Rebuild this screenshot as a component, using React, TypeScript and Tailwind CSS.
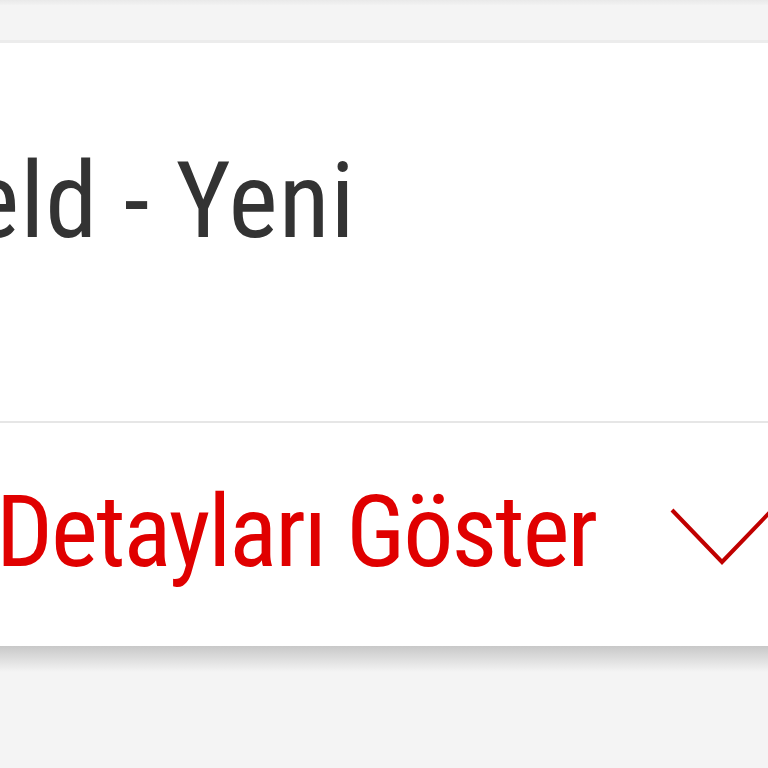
export default function App() {
  return (
    <div className="w-[768px] h-[768px] bg-[#f4f4f4] overflow-hidden flex flex-col" style={{ fontFamily: "Roboto, 'Noto Sans', sans-serif", fontStretch: "condensed" }}>
      <div className="h-[5px] bg-gradient-to-b from-[#e9e9e9] to-[#f2f2f2]" />
      <div className="h-[35px]" />
      <div className="h-[3px] bg-[#ececec]" />
      <div className="bg-white flex flex-col">
        <div className="h-[378px] pt-[106px] overflow-hidden">
          <div className="text-[105px] leading-none text-[#333333] whitespace-nowrap -ml-[30px] tracking-[1px]">eld - Yeni</div>
        </div>
        <div className="h-[2px] bg-[#e6e6e6]" />
        <div className="h-[223px] pt-[59px] flex flex-row items-start overflow-hidden">
          <div className="text-[100px] leading-none text-[#e00000] whitespace-nowrap -ml-[4px] tracking-[-2px]">Detayları Göster</div>
          <svg className="ml-auto -mr-[8px] mt-[24px] shrink-0" width="108" height="60" viewBox="0 0 108 60">
            <polyline points="4,4 54,56 104,4" fill="none" stroke="#c00000" strokeWidth="4" />
          </svg>
        </div>
      </div>
      <div className="h-[26px] bg-gradient-to-b from-[#c8c8c8] to-[#f4f4f4]" />
    </div>
  );
}
